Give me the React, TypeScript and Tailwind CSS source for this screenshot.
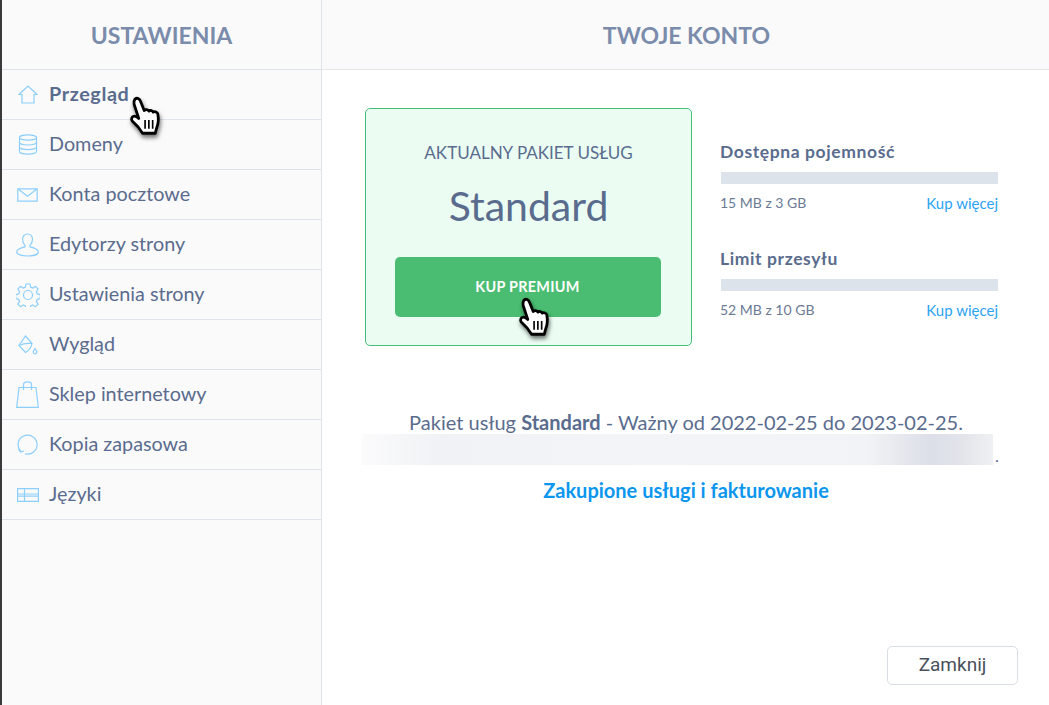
const font = "[font-family:Lato,'Noto_Sans',sans-serif]";
const stroke = "#8ccffb";

function Home() {
	return (
		<svg width="20" height="20" viewBox="0 0 20 20" fill="none" stroke={stroke} strokeWidth="1.2">
			<path d="M1 9.500 10 1l9 8.500h-3V18H4V9.500z" />
		</svg>
	);
}
function Database() {
	return (
		<svg width="20" height="21" viewBox="0 0 20 21" fill="none" stroke={stroke} strokeWidth="1.2">
			<ellipse cx="10" cy="3.500" rx="8.500" ry="2.700" />
			<path d="M1.500 3.500v14c0 1.500 3.800 2.700 8.500 2.700s8.500-1.200 8.500-2.700v-14M1.500 8.300c0 1.500 3.800 2.700 8.500 2.700s8.500-1.200 8.500-2.700M1.500 13c0 1.500 3.800 2.700 8.500 2.700s8.500-1.200 8.500-2.700" />
		</svg>
	);
}
function Mail() {
	return (
		<svg width="21" height="14" viewBox="0 0 21 14" fill="none" stroke={stroke} strokeWidth="1.2">
			<path d="M.8.800h19.400v12.400H.8zM.8.800l9.700 7.400L20.200.800" />
		</svg>
	);
}
function User() {
	return (
		<svg width="23" height="24" viewBox="0 0 23 24" fill="none" stroke={stroke} strokeWidth="1.2">
			<path d="M11.500 1c3 0 5 2.300 5 5.300 0 2.500-1.200 4.700-2.500 6v1.500c3.500.8 8.300 2.300 8.300 5.200 0 2.500-5 4-10.800 4S.7 21.500.7 19c0-2.900 4.800-4.400 8.300-5.200v-1.500c-1.300-1.300-2.500-3.500-2.500-6 0-3 2-5.300 5-5.300z" />
		</svg>
	);
}
function Gear() {
	return (
		<svg width="24" height="24" viewBox="0 0 24 24" fill="none" stroke={stroke} strokeWidth="1.2">
			<circle cx="12" cy="12" r="4.500" />
			<path d="M10 1h4l.7 3.200 2.100.9 2.800-1.700 2.500 2.700-1.700 2.700.9 2.100 3 .7v4l-3 .7-.9 2.100 1.700 2.700-2.700 2.600-2.700-1.700-2 .9-.7 3h-4l-.7-3-2-.9-2.700 1.700-2.700-2.600 1.700-2.700-.9-2.100-3-.7v-4l3-.7.900-2.100-1.700-2.700 2.500-2.700 2.800 1.700 2.100-.9z" />
		</svg>
	);
}
function Paint() {
	return (
		<svg width="20" height="20" viewBox="0 0 20 20" fill="none" stroke={stroke} strokeWidth="1.2">
			<path d="M7.500 1 14 8.500c-.5 3-2.500 6.500-6.500 9L1 10.500z" />
			<path d="M1 10.500c3-1.500 9-2.500 13-2" />
			<path d="M17 13.500c1.200 1.700 1.800 2.600 1.800 3.500a1.800 1.800 0 0 1-3.600 0c0-.9.600-1.800 1.800-3.500z" />
		</svg>
	);
}
function Bag() {
	return (
		<svg width="23" height="27" viewBox="0 0 23 27" fill="none" stroke={stroke} strokeWidth="1.2">
			<path d="M3 6.500h17l2.300 19.800H.7z" />
			<path d="M7.500 9V3.500C7.500 2 9 .8 11.500.8S15.500 2 15.500 3.500V9" />
		</svg>
	);
}
function Backup() {
	return (
		<svg width="21" height="21" viewBox="0 0 21 21" fill="none" stroke={stroke} strokeWidth="1.2">
			<path d="M4 17.500A9.500 9.500 0 1 1 8 19.800" />
			<path d="M1.500 15.500 3.800 18l3.200-1" />
		</svg>
	);
}
function Table() {
	return (
		<svg width="22" height="14" viewBox="0 0 22 14" fill="none" stroke={stroke} strokeWidth="1.2">
			<path d="M.6.600h20.800v12.800H.6zM.6 6h20.800M.6 8.200h20.800M7.500.6v12.800" />
		</svg>
	);
}

function Hand({ className }: { className: string }) {
	return (
		<svg
			className={className}
			width="41"
			height="48"
			viewBox="0 0 32 38"
			style={{ filter: "drop-shadow(1px 3px 2px rgba(0,0,0,.55))" }}
		>
			<path
				d="M4.500 2.500C6.200 1 8 2 8.800 4l3 7.500c1-1.200 3-.8 3.700.5 1-1 3-.6 3.500.8 1.300-.8 3.300-.2 3.600 1.500.6 3.500.5 7.500-.8 10.500l-1.300 4.700H10.500L7 24.500 2.500 20c-1.500-1.700-.5-4 1.500-4 1.200 0 2.500.8 3.500 1.800L3.800 6.500c-.3-1.500 0-3 .7-4z"
				fill="#fff"
				stroke="#000"
				strokeWidth="2.200"
				strokeLinejoin="round"
			/>
			<path d="M12.500 19v7M15.500 19v7M18.500 19v7" stroke="#000" strokeWidth="1.300" />
		</svg>
	);
}

const items = [
	{ label: "Przegląd", icon: <Home />, bold: true },
	{ label: "Domeny", icon: <Database /> },
	{ label: "Konta pocztowe", icon: <Mail /> },
	{ label: "Edytorzy strony", icon: <User /> },
	{ label: "Ustawienia strony", icon: <Gear /> },
	{ label: "Wygląd", icon: <Paint /> },
	{ label: "Sklep internetowy", icon: <Bag /> },
	{ label: "Kopia zapasowa", icon: <Backup /> },
	{ label: "Języki", icon: <Table /> },
];

function Usage({ title, used }: { title: string; used: string }) {
	return (
		<div className="w-[278px]">
			<div className="text-[17.5px] leading-[20px] font-bold tracking-[.6px] text-[#5a6c8e]">{title}</div>
			<div className="mt-[10px] ml-[1px] h-[12px] bg-[#dde3ea]" />
			<div className="mt-[10px] flex items-start justify-between text-[14px] leading-[18px]">
				<span className="text-[#6b7a94]">{used}</span>
				<a className="text-[15px] text-[#2ba4f5]">Kup więcej</a>
			</div>
		</div>
	);
}

export default function App() {
	return (
		<div className={`${font} flex h-[705px] w-[1049px] overflow-hidden border-l-2 border-[#3a3a3a] bg-white`}>
			<aside className="relative w-[320px] shrink-0 border-r border-[#dfe3ea] bg-[#fafafb]">
				<h2 className="flex h-[70px] items-center justify-center border-b border-[#dfe3ea] pt-[1px] text-[23px] font-bold text-[#7b8cab]">
					USTAWIENIA
				</h2>
				<nav>
					{items.map((item) => (
						<div key={item.label} className="flex h-[50px] items-center border-b border-[#dfe3ea] text-[19.8px] text-[#5a6c8e]">
							<span className="flex w-[47px] shrink-0 justify-center pl-[4px]">{item.icon}</span>
							<span className={item.bold ? "pb-[2px] font-bold tracking-[.6px]" : "pb-[2px]"}>{item.label}</span>
						</div>
					))}
				</nav>
				<Hand className="absolute left-[127px] top-[96px]" />
			</aside>

			<main className="flex min-w-0 flex-1 flex-col">
				<h1 className="flex h-[70px] items-center justify-center border-b border-[#e4e7ec] bg-[#fafafb] pt-[1px] pl-[2px] text-[23px] font-bold text-[#7b8cab]">
					TWOJE KONTO
				</h1>
				<div className="flex flex-1 flex-col pl-[43px] pt-[38px]">
					<div className="flex">
						<section className="relative flex h-[238px] w-[327px] flex-col items-center rounded-[5px] border border-[#45bf78] bg-[#ebfdf3] pt-[34px] text-[#5a6c8e]">
							<div className="text-[17px] leading-[20px]">AKTUALNY PAKIET USŁUG</div>
							<div className="mt-[20px] text-[41px] leading-[46px]">Standard</div>
							<button className="mt-[28px] -ml-[2px] h-[60px] w-[266px] rounded-[5px] bg-[#4bbd72] text-[14.4px] font-bold tracking-[.3px] text-white">
								KUP PREMIUM
							</button>
							<Hand className="absolute left-[152px] top-[188px]" />
						</section>
						<div className="ml-[28px] flex flex-col gap-[37px] pt-[34px]">
							<Usage title="Dostępna pojemność" used="15 MB z 3 GB" />
							<Usage title="Limit przesyłu" used="52 MB z 10 GB" />
						</div>
					</div>
					<div className="mt-[64px] w-[642px] text-center text-[20px] leading-[24px] text-[#5a6c8e]">
						Pakiet usług <b>Standard</b> - Ważny od 2022-02-25 do 2023-02-25.
					</div>
					<div className="flex h-[31px] items-end">
						<div className="-ml-[3px] h-[31px] w-[631px] bg-[linear-gradient(90deg,#fbfbfc_0%,#f1f2f5_12%,#f3f4f7_45%,#f2f3f6_80%,#dcdfe7_90%,#e2e4ea_95%,#eef0f3_100%)]" />
						<span className="ml-[2px] leading-[18px] text-[#5a6c8e]">.</span>
					</div>
					<a className="mt-[13px] w-[642px] text-center text-[20px] leading-[24px] font-bold text-[#0d96ee]">
						Zakupione usługi i fakturowanie
					</a>
					<div className="mt-auto mb-[20px] flex justify-end pr-[31px]">
						<button className="h-[39px] w-[131px] rounded-[5px] border border-[#d9dee4] bg-white font-['Roboto',sans-serif] text-[19px] text-[#4a4f5c]">
							Zamknij
						</button>
					</div>
				</div>
			</main>
		</div>
	);
}
